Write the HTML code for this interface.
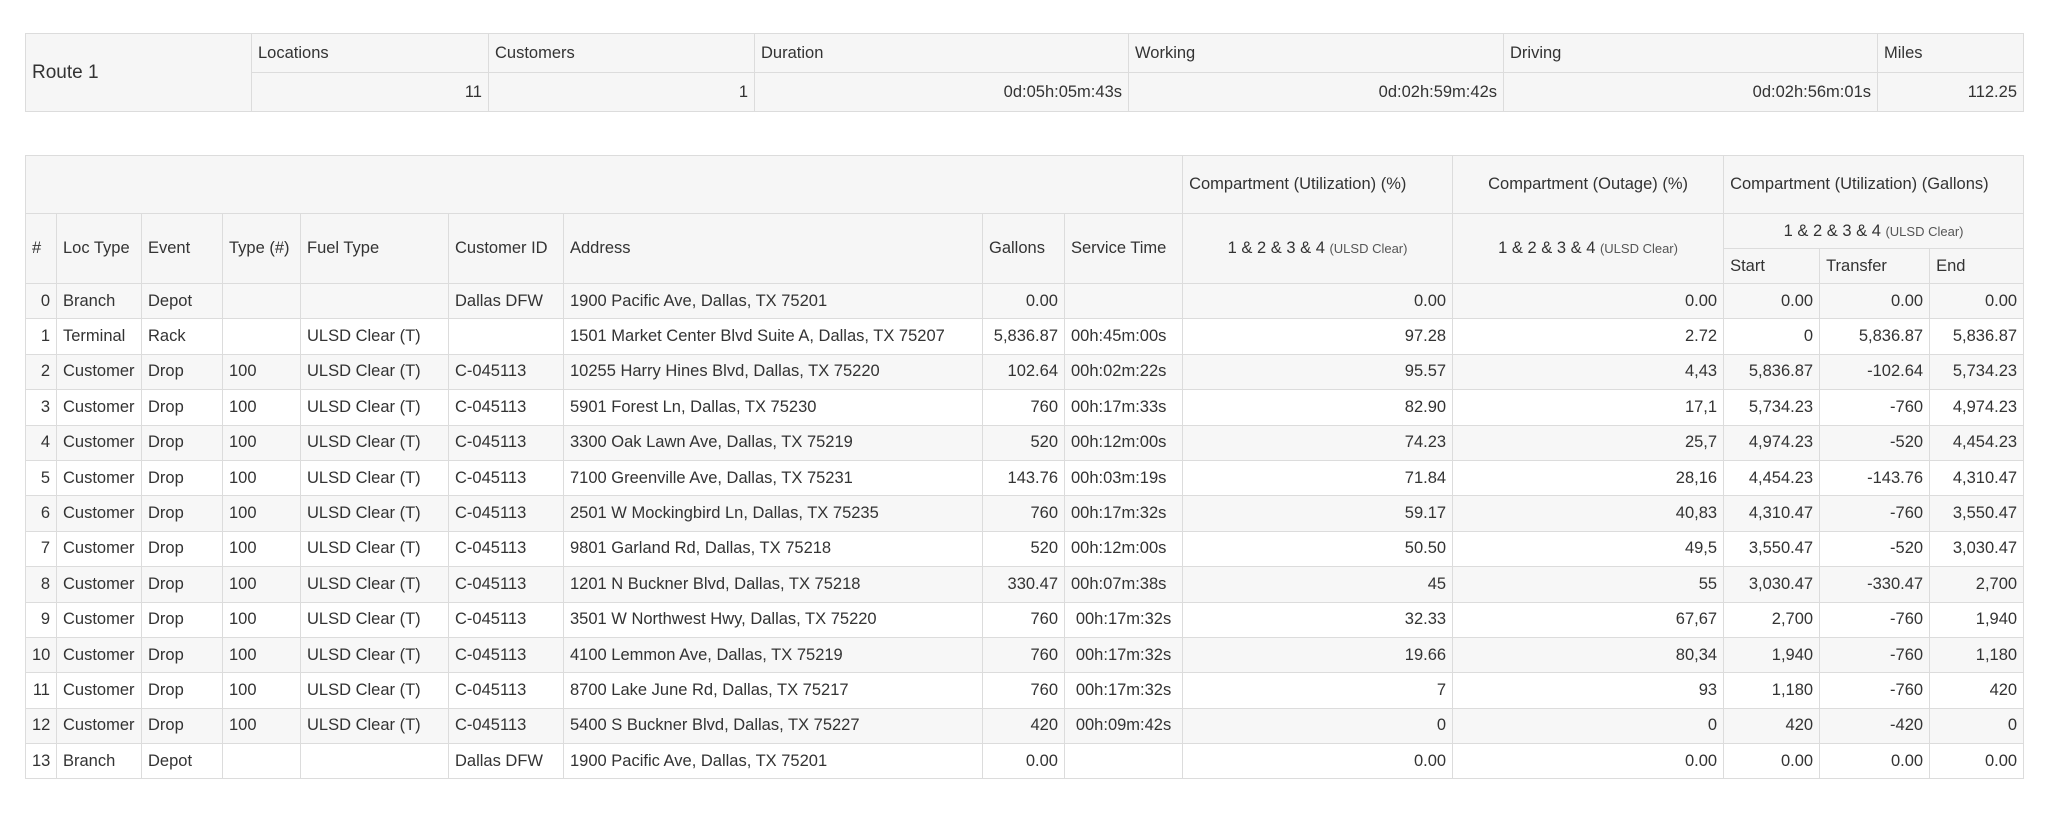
<!DOCTYPE html>
<html><head><meta charset="utf-8"><style>
body{margin:0;background:#fff;width:2048px;height:814px;overflow:hidden;font-family:"Liberation Sans",sans-serif;font-size:16.5px;color:#333;}
table{border-collapse:collapse;table-layout:fixed;position:absolute;left:25px;}
td,th{border:1px solid #dcdcdc;padding:0 6px;font-weight:normal;text-align:left;white-space:nowrap;overflow:hidden;}
#t1{top:33px;width:1998px;background:#f6f6f6;}
#t1 td{height:38px;}
#t2{top:155px;width:1998px;}
#t2 thead th{background:#f6f6f6;}
#t2 tbody td{height:34.4px;}
#t2 tbody tr:nth-child(odd) td{background:#f7f7f7;}
.r{text-align:right}.c{text-align:center}
small{font-size:13px;color:#555}
</style></head><body>
<table id="t1">
<colgroup><col style="width:226px"><col style="width:237px"><col style="width:266px"><col style="width:374px"><col style="width:375px"><col style="width:374px"><col style="width:146px"></colgroup>
<tr><td rowspan="2" style="font-size:19px">Route 1</td><td>Locations</td><td>Customers</td><td>Duration</td><td>Working</td><td>Driving</td><td>Miles</td></tr>
<tr><td class="r">11</td><td class="r">1</td><td class="r">0d:05h:05m:43s</td><td class="r">0d:02h:59m:42s</td><td class="r">0d:02h:56m:01s</td><td class="r">112.25</td></tr>
</table>
<table id="t2">
<colgroup><col style="width:31px"><col style="width:85px"><col style="width:81px"><col style="width:78px"><col style="width:148px"><col style="width:115px"><col style="width:419px"><col style="width:82px"><col style="width:118px"><col style="width:270px"><col style="width:271px"><col style="width:96px"><col style="width:110px"><col style="width:94px"></colgroup>
<thead>
<tr><th colspan="9" style="height:57px"></th><th>Compartment (Utilization) (%)</th><th class="c">Compartment (Outage) (%)</th><th colspan="3">Compartment (Utilization) (Gallons)</th></tr>
<tr><th rowspan="2">#</th><th rowspan="2">Loc Type</th><th rowspan="2">Event</th><th rowspan="2">Type (#)</th><th rowspan="2">Fuel Type</th><th rowspan="2">Customer ID</th><th rowspan="2">Address</th><th rowspan="2">Gallons</th><th rowspan="2">Service Time</th><th rowspan="2" class="c">1 &amp; 2 &amp; 3 &amp; 4 <small>(ULSD Clear)</small></th><th rowspan="2" class="c">1 &amp; 2 &amp; 3 &amp; 4 <small>(ULSD Clear)</small></th><th colspan="3" class="c" style="height:34px">1 &amp; 2 &amp; 3 &amp; 4 <small>(ULSD Clear)</small></th></tr>
<tr><th style="height:34px">Start</th><th>Transfer</th><th>End</th></tr>
</thead>
<tbody>
<tr><td class="r">0</td><td>Branch</td><td>Depot</td><td></td><td></td><td>Dallas DFW</td><td>1900 Pacific Ave, Dallas, TX 75201</td><td class="r">0.00</td><td></td><td class="r">0.00</td><td class="r">0.00</td><td class="r">0.00</td><td class="r">0.00</td><td class="r">0.00</td></tr>
<tr><td class="r">1</td><td>Terminal</td><td>Rack</td><td></td><td>ULSD Clear (T)</td><td></td><td>1501 Market Center Blvd Suite A, Dallas, TX 75207</td><td class="r">5,836.87</td><td>00h:45m:00s</td><td class="r">97.28</td><td class="r">2.72</td><td class="r">0</td><td class="r">5,836.87</td><td class="r">5,836.87</td></tr>
<tr><td class="r">2</td><td>Customer</td><td>Drop</td><td>100</td><td>ULSD Clear (T)</td><td>C-045113</td><td>10255 Harry Hines Blvd, Dallas, TX 75220</td><td class="r">102.64</td><td>00h:02m:22s</td><td class="r">95.57</td><td class="r">4,43</td><td class="r">5,836.87</td><td class="r">-102.64</td><td class="r">5,734.23</td></tr>
<tr><td class="r">3</td><td>Customer</td><td>Drop</td><td>100</td><td>ULSD Clear (T)</td><td>C-045113</td><td>5901 Forest Ln, Dallas, TX 75230</td><td class="r">760</td><td>00h:17m:33s</td><td class="r">82.90</td><td class="r">17,1</td><td class="r">5,734.23</td><td class="r">-760</td><td class="r">4,974.23</td></tr>
<tr><td class="r">4</td><td>Customer</td><td>Drop</td><td>100</td><td>ULSD Clear (T)</td><td>C-045113</td><td>3300 Oak Lawn Ave, Dallas, TX 75219</td><td class="r">520</td><td>00h:12m:00s</td><td class="r">74.23</td><td class="r">25,7</td><td class="r">4,974.23</td><td class="r">-520</td><td class="r">4,454.23</td></tr>
<tr><td class="r">5</td><td>Customer</td><td>Drop</td><td>100</td><td>ULSD Clear (T)</td><td>C-045113</td><td>7100 Greenville Ave, Dallas, TX 75231</td><td class="r">143.76</td><td>00h:03m:19s</td><td class="r">71.84</td><td class="r">28,16</td><td class="r">4,454.23</td><td class="r">-143.76</td><td class="r">4,310.47</td></tr>
<tr><td class="r">6</td><td>Customer</td><td>Drop</td><td>100</td><td>ULSD Clear (T)</td><td>C-045113</td><td>2501 W Mockingbird Ln, Dallas, TX 75235</td><td class="r">760</td><td>00h:17m:32s</td><td class="r">59.17</td><td class="r">40,83</td><td class="r">4,310.47</td><td class="r">-760</td><td class="r">3,550.47</td></tr>
<tr><td class="r">7</td><td>Customer</td><td>Drop</td><td>100</td><td>ULSD Clear (T)</td><td>C-045113</td><td>9801 Garland Rd, Dallas, TX 75218</td><td class="r">520</td><td>00h:12m:00s</td><td class="r">50.50</td><td class="r">49,5</td><td class="r">3,550.47</td><td class="r">-520</td><td class="r">3,030.47</td></tr>
<tr><td class="r">8</td><td>Customer</td><td>Drop</td><td>100</td><td>ULSD Clear (T)</td><td>C-045113</td><td>1201 N Buckner Blvd, Dallas, TX 75218</td><td class="r">330.47</td><td>00h:07m:38s</td><td class="r">45</td><td class="r">55</td><td class="r">3,030.47</td><td class="r">-330.47</td><td class="r">2,700</td></tr>
<tr><td class="r">9</td><td>Customer</td><td>Drop</td><td>100</td><td>ULSD Clear (T)</td><td>C-045113</td><td>3501 W Northwest Hwy, Dallas, TX 75220</td><td class="r">760</td><td class="c">00h:17m:32s</td><td class="r">32.33</td><td class="r">67,67</td><td class="r">2,700</td><td class="r">-760</td><td class="r">1,940</td></tr>
<tr><td class="r">10</td><td>Customer</td><td>Drop</td><td>100</td><td>ULSD Clear (T)</td><td>C-045113</td><td>4100 Lemmon Ave, Dallas, TX 75219</td><td class="r">760</td><td class="c">00h:17m:32s</td><td class="r">19.66</td><td class="r">80,34</td><td class="r">1,940</td><td class="r">-760</td><td class="r">1,180</td></tr>
<tr><td class="r">11</td><td>Customer</td><td>Drop</td><td>100</td><td>ULSD Clear (T)</td><td>C-045113</td><td>8700 Lake June Rd, Dallas, TX 75217</td><td class="r">760</td><td class="c">00h:17m:32s</td><td class="r">7</td><td class="r">93</td><td class="r">1,180</td><td class="r">-760</td><td class="r">420</td></tr>
<tr><td class="r">12</td><td>Customer</td><td>Drop</td><td>100</td><td>ULSD Clear (T)</td><td>C-045113</td><td>5400 S Buckner Blvd, Dallas, TX 75227</td><td class="r">420</td><td class="c">00h:09m:42s</td><td class="r">0</td><td class="r">0</td><td class="r">420</td><td class="r">-420</td><td class="r">0</td></tr>
<tr><td class="r">13</td><td>Branch</td><td>Depot</td><td></td><td></td><td>Dallas DFW</td><td>1900 Pacific Ave, Dallas, TX 75201</td><td class="r">0.00</td><td></td><td class="r">0.00</td><td class="r">0.00</td><td class="r">0.00</td><td class="r">0.00</td><td class="r">0.00</td></tr>
</tbody>
</table>
</body></html>
